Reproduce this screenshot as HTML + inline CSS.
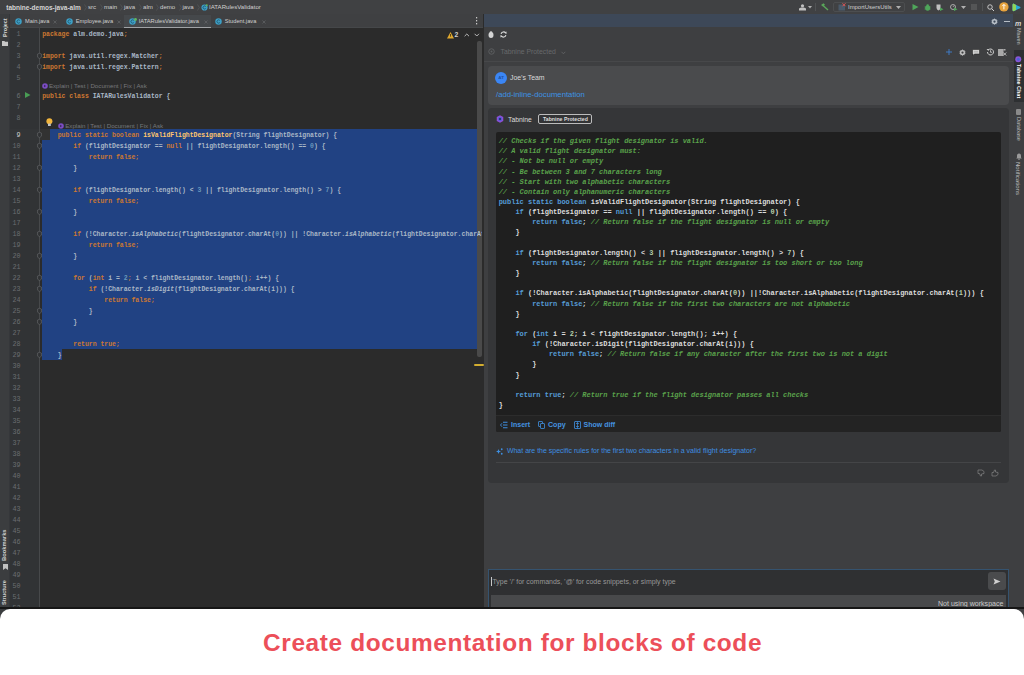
<!DOCTYPE html><html><head><meta charset="utf-8"><style>
*{margin:0;padding:0;box-sizing:border-box}
html,body{width:1024px;height:675px;overflow:hidden;background:#3f4042;font-family:"Liberation Sans",sans-serif;position:relative}
.a{position:absolute}
.t{position:absolute;white-space:pre;line-height:1}
svg{position:absolute;overflow:visible}
.ed{position:absolute;white-space:pre;font-family:"Liberation Mono",monospace;font-size:6.475px;line-height:11px;height:11px;color:#a9b7c6;font-weight:bold}
.k{color:#cc7832}.f{color:#ffc66d}.n{color:#6897bb}.i{font-style:italic}
.ln{position:absolute;font-family:"Liberation Mono",monospace;font-size:6.7px;line-height:11px;color:#606366;text-align:right;width:12px;left:8.5px}
.cc{position:absolute;white-space:pre;font-family:"Liberation Mono",monospace;font-weight:bold;font-size:6.98px;line-height:10.146px;color:#dcdcdc}
.ck{color:#569cd6}.cm{color:#5aa24b;font-style:italic}.cn{color:#b5cea8}
.vt{position:absolute;white-space:pre;line-height:1;transform-origin:0 0}
</style></head><body>
<div class="a" style="left:0;top:0;width:1024px;height:14px;background:#404143"></div>
<div class="a" style="left:10px;top:14px;width:473px;height:14px;background:#3f4042;border-bottom:1px solid #454749"></div>
<div class="a" style="left:0;top:14px;width:10px;height:600px;background:#3b3d3f;border-right:1px solid #35373a"></div>
<div class="a" style="left:10px;top:28px;width:29px;height:590px;background:#313335"></div>
<div class="a" style="left:39px;top:28px;width:444px;height:590px;background:#2b2b2b;border-left:1px solid #47494b"></div>
<div class="a" style="left:483px;top:14px;width:530px;height:600px;background:#3e3f41;border-left:1px solid #2b2b2b"></div>
<div class="a" style="left:1013px;top:14px;width:11px;height:600px;background:#3e3f41"></div>
<div class="a" style="left:40px;top:129.40px;width:10px;height:11px;background:#323232"></div>
<div class="a" style="left:50px;top:129.40px;width:427.1px;height:11px;background:#214283"></div>
<div class="a" style="left:42px;top:140.40px;width:435.1px;height:209.00px;background:#214283"></div>
<div class="a" style="left:42px;top:349.40px;width:19.8px;height:11px;background:#214283"></div>
<div class="a" style="left:10px;top:129.40px;width:29px;height:11px;background:#333537"></div>
<div class="a" style="left:42.2px;top:28px;width:440px;height:590px;overflow:hidden">
<div class="ed" style="left:0;top:1.00px"><span class="k">package</span> alm.demo.java<span class="k">;</span></div>
<div class="ed" style="left:0;top:23.00px"><span class="k">import</span> java.util.regex.Matcher<span class="k">;</span></div>
<div class="ed" style="left:0;top:34.00px"><span class="k">import</span> java.util.regex.Pattern<span class="k">;</span></div>
<div class="ed" style="left:0;top:62.50px"><span class="k">public class</span> IATARulesValidator {</div>
<div class="ed" style="left:0;top:102.00px">    <span class="k">public static boolean </span><span class="f">isValidFlightDesignator</span>(String flightDesignator) {</div>
<div class="ed" style="left:0;top:113.00px">        <span class="k">if</span> (flightDesignator == <span class="k">null</span> || flightDesignator.length() == <span class="n">0</span>) {</div>
<div class="ed" style="left:0;top:124.00px">            <span class="k">return false;</span></div>
<div class="ed" style="left:0;top:135.00px">        }</div>
<div class="ed" style="left:0;top:157.00px">        <span class="k">if</span> (flightDesignator.length() &lt; <span class="n">3</span> || flightDesignator.length() &gt; <span class="n">7</span>) {</div>
<div class="ed" style="left:0;top:168.00px">            <span class="k">return false;</span></div>
<div class="ed" style="left:0;top:179.00px">        }</div>
<div class="ed" style="left:0;top:201.00px">        <span class="k">if</span> (!Character.<span class="i">isAlphabetic</span>(flightDesignator.charAt(<span class="n">0</span>)) || !Character.<span class="i">isAlphabetic</span>(flightDesignator.charAt(<span class="n">1</span>))) {</div>
<div class="ed" style="left:0;top:212.00px">            <span class="k">return false;</span></div>
<div class="ed" style="left:0;top:223.00px">        }</div>
<div class="ed" style="left:0;top:245.00px">        <span class="k">for</span> (<span class="k">int</span> i = <span class="n">2</span><span class="k">;</span> i &lt; flightDesignator.length()<span class="k">;</span> i++) {</div>
<div class="ed" style="left:0;top:256.00px">            <span class="k">if</span> (!Character.<span class="i">isDigit</span>(flightDesignator.charAt(i))) {</div>
<div class="ed" style="left:0;top:267.00px">                <span class="k">return false;</span></div>
<div class="ed" style="left:0;top:278.00px">            }</div>
<div class="ed" style="left:0;top:289.00px">        }</div>
<div class="ed" style="left:0;top:311.00px">        <span class="k">return true;</span></div>
<div class="ed" style="left:0;top:322.00px">    }</div>
</div>
<div class="ln" style="top:29.30px;color:#6b6e71">1</div>
<div class="ln" style="top:40.30px;color:#6b6e71">2</div>
<div class="ln" style="top:51.30px;color:#6b6e71">3</div>
<div class="ln" style="top:62.30px;color:#6b6e71">4</div>
<div class="ln" style="top:73.30px;color:#6b6e71">5</div>
<div class="ln" style="top:90.80px;color:#6b6e71">6</div>
<div class="ln" style="top:101.80px;color:#6b6e71">7</div>
<div class="ln" style="top:112.80px;color:#6b6e71">8</div>
<div class="ln" style="top:130.30px;color:#d0d0d0">9</div>
<div class="ln" style="top:141.30px;color:#6b6e71">10</div>
<div class="ln" style="top:152.30px;color:#6b6e71">11</div>
<div class="ln" style="top:163.30px;color:#6b6e71">12</div>
<div class="ln" style="top:174.30px;color:#6b6e71">13</div>
<div class="ln" style="top:185.30px;color:#6b6e71">14</div>
<div class="ln" style="top:196.30px;color:#6b6e71">15</div>
<div class="ln" style="top:207.30px;color:#6b6e71">16</div>
<div class="ln" style="top:218.30px;color:#6b6e71">17</div>
<div class="ln" style="top:229.30px;color:#6b6e71">18</div>
<div class="ln" style="top:240.30px;color:#6b6e71">19</div>
<div class="ln" style="top:251.30px;color:#6b6e71">20</div>
<div class="ln" style="top:262.30px;color:#6b6e71">21</div>
<div class="ln" style="top:273.30px;color:#6b6e71">22</div>
<div class="ln" style="top:284.30px;color:#6b6e71">23</div>
<div class="ln" style="top:295.30px;color:#6b6e71">24</div>
<div class="ln" style="top:306.30px;color:#6b6e71">25</div>
<div class="ln" style="top:317.30px;color:#6b6e71">26</div>
<div class="ln" style="top:328.30px;color:#6b6e71">27</div>
<div class="ln" style="top:339.30px;color:#6b6e71">28</div>
<div class="ln" style="top:350.30px;color:#6b6e71">29</div>
<div class="ln" style="top:361.30px;color:#6b6e71">30</div>
<div class="ln" style="top:372.30px;color:#6b6e71">31</div>
<div class="ln" style="top:383.30px;color:#6b6e71">32</div>
<div class="ln" style="top:394.30px;color:#6b6e71">33</div>
<div class="ln" style="top:405.30px;color:#6b6e71">34</div>
<div class="ln" style="top:416.30px;color:#6b6e71">35</div>
<div class="ln" style="top:427.30px;color:#6b6e71">36</div>
<div class="ln" style="top:438.30px;color:#6b6e71">37</div>
<div class="ln" style="top:449.30px;color:#6b6e71">38</div>
<div class="ln" style="top:460.30px;color:#6b6e71">39</div>
<div class="ln" style="top:471.30px;color:#6b6e71">40</div>
<div class="ln" style="top:482.30px;color:#6b6e71">41</div>
<div class="ln" style="top:493.30px;color:#6b6e71">42</div>
<div class="ln" style="top:504.30px;color:#6b6e71">43</div>
<div class="ln" style="top:515.30px;color:#6b6e71">44</div>
<div class="ln" style="top:526.30px;color:#6b6e71">45</div>
<div class="ln" style="top:537.30px;color:#6b6e71">46</div>
<div class="ln" style="top:548.30px;color:#6b6e71">47</div>
<div class="ln" style="top:559.30px;color:#6b6e71">48</div>
<div class="ln" style="top:570.30px;color:#6b6e71">49</div>
<div class="ln" style="top:581.30px;color:#6b6e71">50</div>
<div class="ln" style="top:592.30px;color:#6b6e71">51</div>
<div class="ln" style="top:603.30px;color:#6b6e71">52</div>
<svg style="left:36.5px;top:52.90px" width="5" height="6"><path d="M0.6 1 L2.5 0.3 L4.4 1 V4.2 L2.5 5.6 L0.6 4.2 Z" fill="#303234" stroke="#6a6c6e" stroke-width="0.6"/></svg>
<svg style="left:36.5px;top:63.90px" width="5" height="6"><path d="M0.6 1 L2.5 0.3 L4.4 1 V4.2 L2.5 5.6 L0.6 4.2 Z" fill="#303234" stroke="#6a6c6e" stroke-width="0.6"/></svg>
<svg style="left:36.5px;top:131.90px" width="5" height="6"><path d="M0.6 1 L2.5 0.3 L4.4 1 V4.2 L2.5 5.6 L0.6 4.2 Z" fill="#303234" stroke="#6a6c6e" stroke-width="0.6"/></svg>
<svg style="left:36.5px;top:142.90px" width="5" height="6"><path d="M0.6 1 L2.5 0.3 L4.4 1 V4.2 L2.5 5.6 L0.6 4.2 Z" fill="#303234" stroke="#6a6c6e" stroke-width="0.6"/></svg>
<svg style="left:36.5px;top:164.90px" width="5" height="6"><path d="M0.6 1 L2.5 0.3 L4.4 1 V4.2 L2.5 5.6 L0.6 4.2 Z" fill="#303234" stroke="#6a6c6e" stroke-width="0.6"/></svg>
<svg style="left:36.5px;top:186.90px" width="5" height="6"><path d="M0.6 1 L2.5 0.3 L4.4 1 V4.2 L2.5 5.6 L0.6 4.2 Z" fill="#303234" stroke="#6a6c6e" stroke-width="0.6"/></svg>
<svg style="left:36.5px;top:208.90px" width="5" height="6"><path d="M0.6 1 L2.5 0.3 L4.4 1 V4.2 L2.5 5.6 L0.6 4.2 Z" fill="#303234" stroke="#6a6c6e" stroke-width="0.6"/></svg>
<svg style="left:36.5px;top:230.90px" width="5" height="6"><path d="M0.6 1 L2.5 0.3 L4.4 1 V4.2 L2.5 5.6 L0.6 4.2 Z" fill="#303234" stroke="#6a6c6e" stroke-width="0.6"/></svg>
<svg style="left:36.5px;top:252.90px" width="5" height="6"><path d="M0.6 1 L2.5 0.3 L4.4 1 V4.2 L2.5 5.6 L0.6 4.2 Z" fill="#303234" stroke="#6a6c6e" stroke-width="0.6"/></svg>
<svg style="left:36.5px;top:274.90px" width="5" height="6"><path d="M0.6 1 L2.5 0.3 L4.4 1 V4.2 L2.5 5.6 L0.6 4.2 Z" fill="#303234" stroke="#6a6c6e" stroke-width="0.6"/></svg>
<svg style="left:36.5px;top:285.90px" width="5" height="6"><path d="M0.6 1 L2.5 0.3 L4.4 1 V4.2 L2.5 5.6 L0.6 4.2 Z" fill="#303234" stroke="#6a6c6e" stroke-width="0.6"/></svg>
<svg style="left:36.5px;top:307.90px" width="5" height="6"><path d="M0.6 1 L2.5 0.3 L4.4 1 V4.2 L2.5 5.6 L0.6 4.2 Z" fill="#303234" stroke="#6a6c6e" stroke-width="0.6"/></svg>
<svg style="left:36.5px;top:318.90px" width="5" height="6"><path d="M0.6 1 L2.5 0.3 L4.4 1 V4.2 L2.5 5.6 L0.6 4.2 Z" fill="#303234" stroke="#6a6c6e" stroke-width="0.6"/></svg>
<svg style="left:36.5px;top:351.90px" width="5" height="6"><path d="M0.6 1 L2.5 0.3 L4.4 1 V4.2 L2.5 5.6 L0.6 4.2 Z" fill="#303234" stroke="#6a6c6e" stroke-width="0.6"/></svg>
<svg style="left:24.7px;top:92.10px" width="6" height="6"><path d="M0 0 L5.5 3 L0 6 Z" fill="#499c54"/></svg>
<svg style="left:46px;top:117.5px" width="7" height="9"><circle cx="3.4" cy="3.2" r="3" fill="#f2b53c"/><rect x="2" y="5.6" width="2.8" height="2.4" fill="#bfc3c7"/></svg>
<svg style="left:41.5px;top:83.20px" width="7" height="7"><circle cx="3" cy="3" r="2.8" fill="#7c4dc4"/><path d="M2 1.8 L4.2 3 L2 4.2 Z" fill="#3b2a60"/></svg>
<div class="t" style="left:48.9px;top:83.20px;font-size:6.18px;color:#76787b">Explain | Test | Document | Fix | Ask</div>
<svg style="left:57.8px;top:122.70px" width="7" height="7"><circle cx="3" cy="3" r="2.8" fill="#7c4dc4"/><path d="M2 1.8 L4.2 3 L2 4.2 Z" fill="#3b2a60"/></svg>
<div class="t" style="left:65.2px;top:122.70px;font-size:6.18px;color:#76787b">Explain | Test | Document | Fix | Ask</div>
<svg style="left:447px;top:31.5px" width="8" height="7"><path d="M3.5 0 L7 6.5 H0 Z" fill="#e0a82e"/><rect x="3.1" y="2" width="0.8" height="2.6" fill="#3b2e0a"/></svg>
<div class="t" style="left:454.6px;top:31.5px;font-size:6.8px;font-weight:bold;color:#d0d0d0">2</div>
<svg style="left:463.5px;top:32.5px" width="6" height="4"><path d="M0.6 3.2 L2.8 1 L5 3.2" fill="none" stroke="#b8b8b8" stroke-width="1"/></svg>
<svg style="left:474px;top:32.5px" width="6" height="4"><path d="M0.6 0.8 L2.8 3 L5 0.8" fill="none" stroke="#b8b8b8" stroke-width="1"/></svg>
<div class="a" style="left:477.1px;top:41.3px;width:4.5px;height:316px;background:rgba(255,255,255,0.15);border-radius:2px"></div>
<div class="a" style="left:474.1px;top:363.8px;width:9.5px;height:1.8px;background:#d2ad30;border-radius:1px"></div>
<svg style="left:475.5px;top:17px" width="2" height="9"><rect x="0" y="0" width="1.2" height="1.4" fill="#c8c8c8"/><rect x="0" y="3" width="1.2" height="1.4" fill="#c8c8c8"/><rect x="0" y="6" width="1.2" height="1.4" fill="#c8c8c8"/></svg>
<div class="a" style="left:484px;top:14px;width:529px;height:12.5px;background:#3d4858"></div>
<svg style="left:990.6px;top:17.5px" width="7" height="7" viewBox="0 0 14 14"><path d="M7 0.5 L8.4 2.4 L10.8 1.8 L11.1 4.2 L13.3 5.3 L12 7.3 L13.3 9.2 L11.1 10.3 L10.8 12.7 L8.4 12.1 L7 14 L5.6 12.1 L3.2 12.7 L2.9 10.3 L0.7 9.2 L2 7.3 L0.7 5.3 L2.9 4.2 L3.2 1.8 L5.6 2.4 Z" fill="#b7bec6"/><circle cx="7" cy="7.2" r="2.3" fill="#3d4858"/></svg>
<div class="a" style="left:1003.8px;top:20.5px;width:6.2px;height:1.4px;background:#b7bec6"></div>
<svg style="left:487.6px;top:31.3px" width="6" height="7" viewBox="0 0 12 14"><ellipse cx="6" cy="8" rx="5" ry="5.8" fill="#d4d4d4"/><ellipse cx="6" cy="2.5" rx="2.6" ry="2.2" fill="#d4d4d4"/></svg>
<svg style="left:500px;top:31.3px" width="7" height="7" viewBox="0 0 14 14"><path d="M2.2 6 A5 5 0 0 1 11.4 4.2" fill="none" stroke="#d8d8d8" stroke-width="2.2"/><path d="M11.8 8 A5 5 0 0 1 2.6 9.8" fill="none" stroke="#d8d8d8" stroke-width="2.2"/><path d="M9 3.5 L13 1 L13 6 Z" fill="#d8d8d8"/><path d="M5 10.5 L1 13 L1 8 Z" fill="#d8d8d8"/></svg>
<svg style="left:488.4px;top:48.4px" width="7" height="7" viewBox="0 0 14 14"><circle cx="7" cy="7" r="5.5" fill="none" stroke="#5c5e60" stroke-width="2"/><circle cx="7" cy="7" r="2" fill="#5c5e60"/></svg>
<div class="t" style="left:500.5px;top:49.2px;font-size:6.87px;color:#67696b">Tabnine Protected</div>
<svg style="left:560.5px;top:50.5px" width="5" height="4"><path d="M0.5 0.8 L2.4 2.8 L4.3 0.8" fill="none" stroke="#646668" stroke-width="0.8"/></svg>
<svg style="left:946.3px;top:48.8px" width="6" height="6"><rect x="2.55" y="0" width="0.9" height="6" fill="#3f7fce"/><rect x="0" y="2.55" width="6" height="0.9" fill="#3f7fce"/></svg>
<svg style="left:959.3px;top:48.8px" width="7" height="7" viewBox="0 0 14 14"><path d="M7 0.5 L8.4 2.4 L10.8 1.8 L11.1 4.2 L13.3 5.3 L12 7.3 L13.3 9.2 L11.1 10.3 L10.8 12.7 L8.4 12.1 L7 14 L5.6 12.1 L3.2 12.7 L2.9 10.3 L0.7 9.2 L2 7.3 L0.7 5.3 L2.9 4.2 L3.2 1.8 L5.6 2.4 Z" fill="#bdbdbd"/><circle cx="7" cy="7.2" r="2.2" fill="#3e3f41"/></svg>
<svg style="left:972px;top:48.8px" width="8" height="7" viewBox="0 0 16 14"><path d="M1 1 H15 V10 H5 L2 13 V10 H1 Z" fill="#d0d0d0" stroke="#1f1f1f" stroke-width="1"/><rect x="4" y="4" width="8" height="3" fill="#b8b8b8"/></svg>
<svg style="left:985.7px;top:48.3px" width="8.5" height="8" viewBox="0 0 17 16"><path d="M3 8 A6 6 0 1 0 5 3.5" fill="none" stroke="#d0d0d0" stroke-width="2"/><path d="M1 2 L6 2 L5 6 Z" fill="#d0d0d0"/><path d="M9 4.5 V8.5 H12" fill="none" stroke="#d0d0d0" stroke-width="1.6"/></svg>
<svg style="left:998.4px;top:48.8px" width="9" height="7" viewBox="0 0 18 14"><rect x="0" y="0" width="11" height="14" fill="#a8a8a8"/><rect x="11" y="0" width="4" height="3" fill="#a8a8a8"/><path d="M10.5 7 L16.5 13 M16.5 7 L10.5 13" stroke="#c8c8c8" stroke-width="1.8"/></svg>
<div class="a" style="left:484px;top:60.5px;width:529px;height:1px;background:#47484a"></div>
<div class="a" style="left:488px;top:66px;width:521px;height:39.2px;background:#4a4b4d;border-radius:4px"></div>
<div class="a" style="left:495px;top:71.5px;width:12.2px;height:12.2px;border-radius:50%;background:#3b86f5"></div>
<div class="t" style="left:498.3px;top:75.5px;font-size:4.4px;font-weight:bold;color:#1f4f9c">AT</div>
<div class="t" style="left:510px;top:74.6px;font-size:6.9px;color:#dadada">Joe’s Team</div>
<div class="t" style="left:496px;top:91px;font-size:7.73px;color:#3d93e4">/add-inline-documentation</div>
<div class="a" style="left:488px;top:108px;width:520.5px;height:375px;background:#353638;border-radius:4px"></div>
<svg style="left:495.8px;top:115.2px" width="8" height="8" viewBox="0 0 16 16"><path d="M8 0.5 L14.5 4.2 V11.8 L8 15.5 L1.5 11.8 V4.2 Z" fill="#8f4fd6"/><path d="M8 3.5 L11.8 5.7 V10.3 L8 12.5 L4.2 10.3 V5.7 Z" fill="#4a62d8"/><circle cx="8" cy="8" r="2" fill="#2a2050"/></svg>
<div class="t" style="left:508px;top:116.7px;font-size:6.77px;color:#dcdcdc">Tabnine</div>
<div class="a" style="left:538.4px;top:114px;width:53.3px;height:9.8px;border:1px solid #bcbcbc;border-radius:2px;background:#333436"></div>
<div class="t" style="left:543px;top:116.9px;font-size:5.2px;font-weight:bold;color:#dedede">Tabnine Protected</div>
<div class="a" style="left:495.5px;top:131.8px;width:505.2px;height:300.7px;background:#1f1f1f;border-radius:2px"></div>
<div class="a" style="left:495.5px;top:414.6px;width:505.2px;height:17.9px;background:#232323;border-top:1px solid #2c2c2c;border-radius:0 0 2px 2px"></div>
<div class="a" style="left:496px;top:136.2px;width:504px;height:278px;overflow:hidden">
<div class="cc" style="left:2.7px;top:0.00px"><span class="cm">// Checks if the given flight designator is valid.</span></div>
<div class="cc" style="left:2.7px;top:10.15px"><span class="cm">// A valid flight designator must:</span></div>
<div class="cc" style="left:2.7px;top:20.29px"><span class="cm">// - Not be null or empty</span></div>
<div class="cc" style="left:2.7px;top:30.44px"><span class="cm">// - Be between 3 and 7 characters long</span></div>
<div class="cc" style="left:2.7px;top:40.58px"><span class="cm">// - Start with two alphabetic characters</span></div>
<div class="cc" style="left:2.7px;top:50.73px"><span class="cm">// - Contain only alphanumeric characters</span></div>
<div class="cc" style="left:2.7px;top:60.88px"><span class="ck">public</span> <span class="ck">static</span> <span class="ck">boolean</span> isValidFlightDesignator(String flightDesignator) {</div>
<div class="cc" style="left:2.7px;top:71.02px">    <span class="ck">if</span> (flightDesignator == <span class="ck">null</span> || flightDesignator.length() == <span class="cn">0</span>) {</div>
<div class="cc" style="left:2.7px;top:81.17px">        <span class="ck">return</span> <span class="ck">false</span>; <span class="cm">// Return false if the flight designator is null or empty</span></div>
<div class="cc" style="left:2.7px;top:91.31px">    }</div>
<div class="cc" style="left:2.7px;top:101.46px"></div>
<div class="cc" style="left:2.7px;top:111.61px">    <span class="ck">if</span> (flightDesignator.length() &lt; <span class="cn">3</span> || flightDesignator.length() &gt; <span class="cn">7</span>) {</div>
<div class="cc" style="left:2.7px;top:121.75px">        <span class="ck">return</span> <span class="ck">false</span>; <span class="cm">// Return false if the flight designator is too short or too long</span></div>
<div class="cc" style="left:2.7px;top:131.90px">    }</div>
<div class="cc" style="left:2.7px;top:142.04px"></div>
<div class="cc" style="left:2.7px;top:152.19px">    <span class="ck">if</span> (!Character.isAlphabetic(flightDesignator.charAt(<span class="cn">0</span>)) ||!Character.isAlphabetic(flightDesignator.charAt(<span class="cn">1</span>))) {</div>
<div class="cc" style="left:2.7px;top:162.34px">        <span class="ck">return</span> <span class="ck">false</span>; <span class="cm">// Return false if the first two characters are not alphabetic</span></div>
<div class="cc" style="left:2.7px;top:172.48px">    }</div>
<div class="cc" style="left:2.7px;top:182.63px"></div>
<div class="cc" style="left:2.7px;top:192.77px">    <span class="ck">for</span> (<span class="ck">int</span> i = <span class="cn">2</span>; i &lt; flightDesignator.length(); i++) {</div>
<div class="cc" style="left:2.7px;top:202.92px">        <span class="ck">if</span> (!Character.isDigit(flightDesignator.charAt(i))) {</div>
<div class="cc" style="left:2.7px;top:213.07px">            <span class="ck">return</span> <span class="ck">false</span>; <span class="cm">// Return false if any character after the first two is not a digit</span></div>
<div class="cc" style="left:2.7px;top:223.21px">        }</div>
<div class="cc" style="left:2.7px;top:233.36px">    }</div>
<div class="cc" style="left:2.7px;top:243.50px"></div>
<div class="cc" style="left:2.7px;top:253.65px">    <span class="ck">return</span> <span class="ck">true</span>; <span class="cm">// Return true if the flight designator passes all checks</span></div>
<div class="cc" style="left:2.7px;top:263.80px">}</div>
</div>
<svg style="left:500.3px;top:421px" width="8" height="8" viewBox="0 0 16 16"><path d="M6 2.5 H15 M6 8 H15 M6 13.5 H15" stroke="#3f8fe0" stroke-width="2"/><path d="M4 4.5 L1 8 L4 11.5" fill="none" stroke="#3f8fe0" stroke-width="1.8"/></svg>
<div class="t" style="left:511.1px;top:421.4px;font-size:7.01px;font-weight:bold;color:#4593e0">Insert</div>
<svg style="left:538.4px;top:421px" width="7" height="8" viewBox="0 0 14 16"><rect x="1" y="1" width="8" height="10" rx="1" fill="none" stroke="#3f8fe0" stroke-width="1.6"/><rect x="5" y="5" width="8" height="10" rx="1" fill="#232323" stroke="#3f8fe0" stroke-width="1.6"/></svg>
<div class="t" style="left:548px;top:421.9px;font-size:7.08px;font-weight:bold;color:#4593e0">Copy</div>
<svg style="left:574px;top:421px" width="7" height="8" viewBox="0 0 14 16"><rect x="1" y="1" width="12" height="14" rx="1" fill="none" stroke="#3f8fe0" stroke-width="1.6"/><path d="M7 1 V15 M4 5 H10 M4 11 H10" stroke="#3f8fe0" stroke-width="1.4"/></svg>
<div class="t" style="left:583.5px;top:421.4px;font-size:7.05px;font-weight:bold;color:#4593e0">Show diff</div>
<svg style="left:496px;top:447.6px" width="7" height="7" viewBox="0 0 14 14"><path d="M5 2 L6.3 5.7 L10 7 L6.3 8.3 L5 12 L3.7 8.3 L0 7 L3.7 5.7 Z" fill="#3f8fe0"/><circle cx="11.5" cy="2.5" r="1.8" fill="#3f8fe0"/><circle cx="11.5" cy="11.5" r="1.8" fill="#3f8fe0"/></svg>
<div class="t" style="left:506.9px;top:447.2px;font-size:6.99px;color:#3f8fe0">What are the specific rules for the first two characters in a valid flight designator?</div>
<div class="a" style="left:496px;top:462px;width:505px;height:1px;background:#444547"></div>
<svg style="left:977px;top:469px" width="8" height="8" viewBox="0 0 16 16"><path d="M2 2 H10 L14 5 V9 L9 10 L9 14 L7 14 L5 9 H2 Z" fill="none" stroke="#8a8a8a" stroke-width="1.3"/></svg>
<svg style="left:991px;top:469px" width="8" height="8" viewBox="0 0 16 16"><path d="M2 14 H10 L14 11 V7 L9 6 L9 2 L7 2 L5 7 H2 Z" fill="none" stroke="#8a8a8a" stroke-width="1.3"/></svg>
<div class="a" style="left:487.7px;top:568.8px;width:521.3px;height:45px;background:#2f3032;border:1.3px solid #35536f;border-bottom:none"></div>
<div class="a" style="left:490.5px;top:594.8px;width:515.5px;height:15px;background:#48494b"></div>
<div class="a" style="left:491.3px;top:577px;width:0.8px;height:8.5px;background:#c8c8c8"></div>
<div class="t" style="left:492.5px;top:578.8px;font-size:6.96px;color:#979797">Type ’/’ for commands, ’@’ for code snippets, or simply type</div>
<div class="t" style="left:938px;top:600.2px;font-size:7.05px;color:#cacaca">Not using workspace</div>
<div class="a" style="left:988.4px;top:572px;width:17.6px;height:17.7px;background:#4a4b4d;border-radius:3px"></div>
<svg style="left:993px;top:577.5px" width="8" height="7" viewBox="0 0 16 14"><path d="M1 1 L15 7 L1 13 L3.5 7 Z" fill="#d0d0d0"/></svg>
<div class="a" style="left:1014px;top:49.5px;width:10px;height:52.5px;background:#2e3032"></div>
<div class="t" style="left:1015px;top:19.7px;font-size:7px;font-weight:bold;font-style:italic;color:#d8d8d8;letter-spacing:-0.3px">m</div>
<div class="vt" style="left:1021px;top:28.1px;font-size:5.53px;color:#bcbcbc;font-weight:normal;transform:rotate(90deg)">Maven</div>
<svg style="left:1015.3px;top:56px" width="6.5" height="6.5" viewBox="0 0 13 13"><circle cx="6.5" cy="6.5" r="6" fill="#8a55d6"/><circle cx="6.5" cy="6.5" r="3" fill="#4a62d8"/></svg>
<div class="vt" style="left:1020.9px;top:63.7px;font-size:5.48px;color:#ffffff;font-weight:bold;transform:rotate(90deg)">Tabnine Chat</div>
<div class="a" style="left:1015.8px;top:108.5px;width:5.5px;height:6px;background:#8a8a8a;border-radius:1px"></div>
<div class="vt" style="left:1021px;top:117px;font-size:5.6px;color:#bcbcbc;font-weight:normal;transform:rotate(90deg)">Database</div>
<svg style="left:1015.5px;top:152.5px" width="6" height="7" viewBox="0 0 12 14"><path d="M6 1 C9 1 10 3.5 10 6 V9 L11.5 11 H0.5 L2 9 V6 C2 3.5 3 1 6 1 Z" fill="#9a9a9a"/><circle cx="6" cy="12.5" r="1.5" fill="#9a9a9a"/></svg>
<div class="vt" style="left:1021.2px;top:162px;font-size:6.06px;color:#bcbcbc;font-weight:normal;transform:rotate(90deg)">Notifications</div>
<div class="vt" style="left:2.8px;top:37.2px;font-size:5.5px;color:#d4d4d4;font-weight:bold;transform:rotate(-90deg)">Project</div>
<svg style="left:2.4px;top:40.6px" width="6" height="5" viewBox="0 0 12 10"><path d="M0 0 H5 L6 1.5 H12 V10 H0 Z" fill="#c8c8c8"/></svg>
<div class="vt" style="left:2px;top:561px;font-size:5.8px;color:#d0d0d0;font-weight:bold;transform:rotate(-90deg)">Bookmarks</div>
<svg style="left:2.5px;top:563.5px" width="5" height="6" viewBox="0 0 10 12"><path d="M0 0 H10 V12 L5 8.5 L0 12 Z" fill="#c0c0c0"/></svg>
<div class="vt" style="left:2px;top:604.7px;font-size:5.6px;color:#d0d0d0;font-weight:bold;transform:rotate(-90deg)">Structure</div>
<div class="t" style="left:6.25px;top:4.6px;font-size:6.53px;font-weight:bold;color:#d4d4d4">tabnine-demos-java-alm</div>
<div class="t" style="left:88px;top:4.3px;font-size:6.1px;color:#d0d0d0">src</div>
<div class="t" style="left:104px;top:4.3px;font-size:6.1px;color:#d0d0d0">main</div>
<div class="t" style="left:124px;top:4.3px;font-size:6.1px;color:#d0d0d0">java</div>
<div class="t" style="left:143px;top:4.3px;font-size:6.1px;color:#d0d0d0">alm</div>
<div class="t" style="left:160px;top:4.3px;font-size:6.1px;color:#d0d0d0">demo</div>
<div class="t" style="left:182.5px;top:4.3px;font-size:6.1px;color:#d0d0d0">java</div>
<div class="t" style="left:209px;top:4.3px;font-size:6.1px;color:#d0d0d0">IATARulesValidator</div>
<svg style="left:84px;top:4px" width="3" height="7"><path d="M0.5 0.5 L2.3 3.5 L0.5 6.5" fill="none" stroke="#5a5c5e" stroke-width="0.6"/></svg>
<svg style="left:99.5px;top:4px" width="3" height="7"><path d="M0.5 0.5 L2.3 3.5 L0.5 6.5" fill="none" stroke="#5a5c5e" stroke-width="0.6"/></svg>
<svg style="left:119.5px;top:4px" width="3" height="7"><path d="M0.5 0.5 L2.3 3.5 L0.5 6.5" fill="none" stroke="#5a5c5e" stroke-width="0.6"/></svg>
<svg style="left:139px;top:4px" width="3" height="7"><path d="M0.5 0.5 L2.3 3.5 L0.5 6.5" fill="none" stroke="#5a5c5e" stroke-width="0.6"/></svg>
<svg style="left:155.8px;top:4px" width="3" height="7"><path d="M0.5 0.5 L2.3 3.5 L0.5 6.5" fill="none" stroke="#5a5c5e" stroke-width="0.6"/></svg>
<svg style="left:178.5px;top:4px" width="3" height="7"><path d="M0.5 0.5 L2.3 3.5 L0.5 6.5" fill="none" stroke="#5a5c5e" stroke-width="0.6"/></svg>
<svg style="left:196.5px;top:4px" width="3" height="7"><path d="M0.5 0.5 L2.3 3.5 L0.5 6.5" fill="none" stroke="#5a5c5e" stroke-width="0.6"/></svg>
<svg style="left:200.5px;top:3.8px" width="7" height="7" viewBox="0 0 14 14"><circle cx="7" cy="7" r="6.2" fill="#3d9ec4"/><path d="M9.5 5 A3 3 0 1 0 9.5 9" fill="none" stroke="#1b4e66" stroke-width="1.6"/><circle cx="11.5" cy="2.5" r="2" fill="#5fb85f"/></svg>
<svg style="left:798.6px;top:4px" width="8" height="6.5" viewBox="0 0 16 13"><circle cx="7" cy="3.5" r="3.2" fill="#c0c0c0"/><path d="M0 13 V10 C0 8 3 7 7 7 C11 7 14 8 14 10 V13 Z" fill="#c0c0c0"/></svg>
<svg style="left:807.6px;top:6px" width="4" height="3"><path d="M0 0 H4 L2 2.5 Z" fill="#b0b0b0"/></svg>
<div class="a" style="left:815.4px;top:3px;width:0.6px;height:8px;background:#505254"></div>
<svg style="left:819.7px;top:3px" width="9" height="8" viewBox="0 0 18 16"><path d="M2 4 L7 0.5 L10 3.5 L6 7 Z" fill="#5aa65a"/><path d="M6 5 L16 14" stroke="#5aa65a" stroke-width="2.8"/></svg>
<div class="a" style="left:833.4px;top:1.8px;width:72px;height:10.2px;border:1px solid #4c4e50;border-radius:2px"></div>
<svg style="left:838.4px;top:3px" width="8.5" height="8" viewBox="0 0 17 16"><rect x="1" y="3" width="13" height="12" fill="#4a5a6a"/><path d="M9 0.5 L15 6.5 M15 0.5 L9 6.5" stroke="#e05555" stroke-width="2"/></svg>
<div class="t" style="left:848px;top:5px;font-size:5.91px;color:#d0d0d0">ImportUsersUtils</div>
<svg style="left:896px;top:5.6px" width="5" height="3"><path d="M0 0 H5 L2.5 3 Z" fill="#b0b0b0"/></svg>
<svg style="left:911.5px;top:4.2px" width="7" height="6.2"><path d="M0.5 0 L6.5 3.1 L0.5 6.2 Z" fill="#4fa65a"/></svg>
<svg style="left:923.6px;top:3.6px" width="7.3" height="7" viewBox="0 0 14 14"><ellipse cx="7" cy="8" rx="5" ry="5.5" fill="#4fa65a"/><ellipse cx="7" cy="2.5" rx="2.5" ry="2" fill="#4fa65a"/><path d="M0.5 6 H13.5 M0.5 10 H13.5" stroke="#4fa65a" stroke-width="1.2"/></svg>
<svg style="left:936.3px;top:3.5px" width="8" height="7.5" viewBox="0 0 16 15"><path d="M1 1 H9 V7 C9 10 7 12 5 13 C3 12 1 10 1 7 Z" fill="#c0c0c0"/><path d="M8 7 L15 10.5 L8 14 Z" fill="#4fa65a"/></svg>
<svg style="left:949.6px;top:3.5px" width="8" height="7.5" viewBox="0 0 16 15"><circle cx="6" cy="6" r="5" fill="none" stroke="#c0c0c0" stroke-width="1.6"/><path d="M6 6 L8 3" stroke="#c0c0c0" stroke-width="1.4"/><path d="M8 7 L15 10.5 L8 14 Z" fill="#4fa65a"/></svg>
<svg style="left:960.5px;top:6px" width="5" height="3"><path d="M0 0 H5 L2.5 3 Z" fill="#b0b0b0"/></svg>
<div class="a" style="left:971.4px;top:4.2px;width:5.5px;height:5.5px;background:#545556"></div>
<div class="a" style="left:982.3px;top:3px;width:0.6px;height:8px;background:#505254"></div>
<svg style="left:986.6px;top:3.6px" width="7.5" height="7.5" viewBox="0 0 15 15"><circle cx="6" cy="6" r="4.5" fill="none" stroke="#d0d0d0" stroke-width="1.8"/><path d="M9.5 9.5 L14 14" stroke="#d0d0d0" stroke-width="2"/></svg>
<svg style="left:998.7px;top:2.2px" width="9.8" height="9.8" viewBox="0 0 20 20"><circle cx="10" cy="10" r="9.5" fill="#e8a33d"/><path d="M10 5 V15 M6.5 8.5 L10 5 L13.5 8.5" fill="none" stroke="#fff" stroke-width="2"/></svg>
<svg style="left:1012px;top:2.5px" width="9" height="9" viewBox="0 0 18 18"><path d="M3 1 Q1 1 1 4 V14 Q1 17 4 16 L16 10.5 Q18 9 16 7.5 L4 2 Z" fill="#27a9d8"/><path d="M3 1 Q1 1 1 4 V14 Q1 17 4 16 L8 14 V4 Z" fill="#8fd45a"/></svg>
<div class="a" style="left:124px;top:14.8px;width:86.6px;height:13px;background:#45484b"></div>
<div class="a" style="left:124px;top:26.5px;width:86.6px;height:1.3px;background:#a0a3a6"></div>
<svg style="left:15.2px;top:17.5px" width="7" height="7" viewBox="0 0 14 14"><circle cx="7" cy="7" r="6.5" fill="#3d9ec4"/><path d="M9.6 4.8 A3.2 3.2 0 1 0 9.6 9.2" fill="none" stroke="#1d5068" stroke-width="1.6"/></svg>
<div class="t" style="left:25px;top:19.3px;font-size:5.7px;color:#d0d0d0">Main.java</div>
<svg style="left:52.8px;top:19.8px" width="4" height="4"><path d="M0.5 0.5 L3.5 3.5 M3.5 0.5 L0.5 3.5" stroke="#6a6c6e" stroke-width="0.6"/></svg>
<svg style="left:65.8px;top:17.5px" width="7" height="7" viewBox="0 0 14 14"><circle cx="7" cy="7" r="6.5" fill="#3d9ec4"/><path d="M9.6 4.8 A3.2 3.2 0 1 0 9.6 9.2" fill="none" stroke="#1d5068" stroke-width="1.6"/></svg>
<div class="t" style="left:75.8px;top:19.3px;font-size:5.7px;color:#d0d0d0">Employee.java</div>
<svg style="left:116.5px;top:19.8px" width="4" height="4"><path d="M0.5 0.5 L3.5 3.5 M3.5 0.5 L0.5 3.5" stroke="#6a6c6e" stroke-width="0.6"/></svg>
<svg style="left:128.8px;top:17.5px" width="7" height="7" viewBox="0 0 14 14"><circle cx="7" cy="7" r="6.5" fill="#3d9ec4"/><path d="M9.6 4.8 A3.2 3.2 0 1 0 9.6 9.2" fill="none" stroke="#1d5068" stroke-width="1.6"/></svg>
<div class="t" style="left:138.75px;top:19.3px;font-size:5.7px;color:#d0d0d0">IATARulesValidator.java</div>
<svg style="left:203.5px;top:19.8px" width="4" height="4"><path d="M0.5 0.5 L3.5 3.5 M3.5 0.5 L0.5 3.5" stroke="#6a6c6e" stroke-width="0.6"/></svg>
<svg style="left:214.6px;top:17.5px" width="7" height="7" viewBox="0 0 14 14"><circle cx="7" cy="7" r="6.5" fill="#3d9ec4"/><path d="M9.6 4.8 A3.2 3.2 0 1 0 9.6 9.2" fill="none" stroke="#1d5068" stroke-width="1.6"/></svg>
<div class="t" style="left:224.7px;top:19.3px;font-size:5.7px;color:#d0d0d0">Student.java</div>
<svg style="left:262px;top:19.8px" width="4" height="4"><path d="M0.5 0.5 L3.5 3.5 M3.5 0.5 L0.5 3.5" stroke="#6a6c6e" stroke-width="0.6"/></svg>
<svg style="left:133.5px;top:17.6px" width="3" height="3"><circle cx="1.5" cy="1.5" r="1.4" fill="#5fb85f"/></svg>
<div class="a" style="left:0;top:607.2px;width:1024px;height:1.5px;background:#161616"></div>
<div class="a" style="left:0;top:608.5px;width:1024px;height:67px;background:#fff;border-radius:10px 10px 0 0"></div>
<div class="t" style="left:263px;top:631.8px;font-size:23.6px;font-weight:bold;color:#ec4f59;letter-spacing:0.6px;transform:scaleX(1.035);transform-origin:0 0">Create documentation for blocks of code</div>
</body></html>
